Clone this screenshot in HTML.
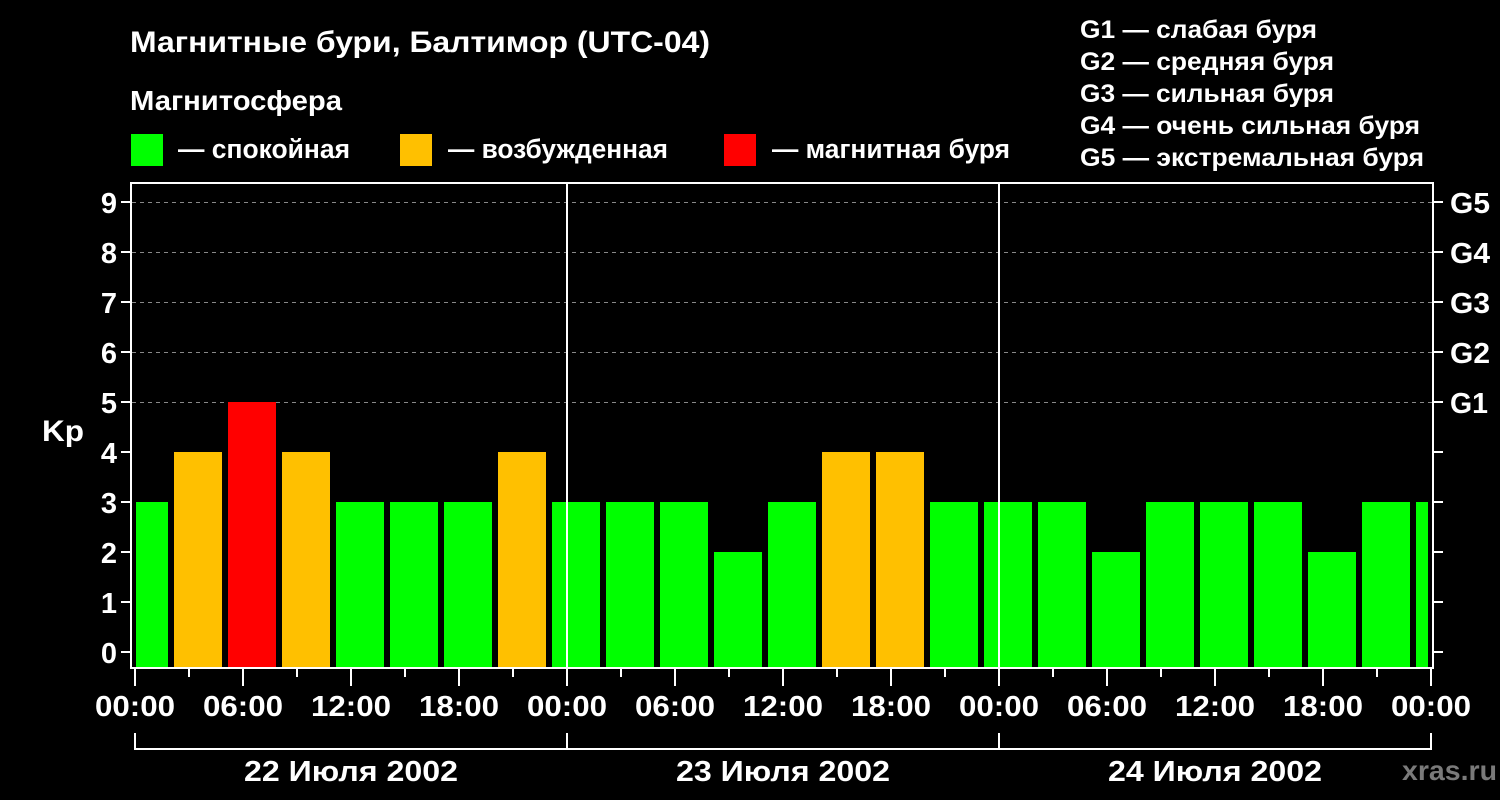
<!DOCTYPE html>
<html><head><meta charset="utf-8"><style>
html,body{margin:0;padding:0;background:#000;width:1500px;height:800px;overflow:hidden}
svg{display:block}
text{font-family:"Liberation Sans",Arial,sans-serif;font-weight:bold;fill:#fff}
</style></head><body>
<svg width="1500" height="800" viewBox="0 0 1500 800" xmlns="http://www.w3.org/2000/svg">
<rect width="1500" height="800" fill="#000"/>
<text x="130" y="52" font-size="30" textLength="580" lengthAdjust="spacingAndGlyphs">Магнитные бури, Балтимор (UTC-04)</text>
<text x="130" y="110" font-size="28" textLength="212" lengthAdjust="spacingAndGlyphs">Магнитосфера</text>
<rect x="131" y="134" width="32" height="32" fill="#00ff00"/>
<text x="178" y="158" font-size="27" textLength="172" lengthAdjust="spacingAndGlyphs">— спокойная</text>
<rect x="400" y="134" width="32" height="32" fill="#ffc000"/>
<text x="448" y="158" font-size="27" textLength="220" lengthAdjust="spacingAndGlyphs">— возбужденная</text>
<rect x="724" y="134" width="32" height="32" fill="#ff0000"/>
<text x="772" y="158" font-size="27" textLength="238" lengthAdjust="spacingAndGlyphs">— магнитная буря</text>
<g font-size="25">
<text x="1080" y="38" textLength="237" lengthAdjust="spacingAndGlyphs">G1 — слабая буря</text>
<text x="1080" y="70" textLength="254" lengthAdjust="spacingAndGlyphs">G2 — средняя буря</text>
<text x="1080" y="102" textLength="254" lengthAdjust="spacingAndGlyphs">G3 — сильная буря</text>
<text x="1080" y="134" textLength="340" lengthAdjust="spacingAndGlyphs">G4 — очень сильная буря</text>
<text x="1080" y="166" textLength="344" lengthAdjust="spacingAndGlyphs">G5 — экстремальная буря</text>
</g>
<g stroke="#888" stroke-width="1" stroke-dasharray="4,4">
<line x1="132" y1="202.5" x2="1432" y2="202.5"/>
<line x1="132" y1="252.5" x2="1432" y2="252.5"/>
<line x1="132" y1="302.5" x2="1432" y2="302.5"/>
<line x1="132" y1="352.5" x2="1432" y2="352.5"/>
<line x1="132" y1="402.5" x2="1432" y2="402.5"/>
</g>
<g>
<rect x="136" y="502" width="32" height="166" fill="#00ff00"/>
<rect x="174" y="452" width="48" height="216" fill="#ffc000"/>
<rect x="228" y="402" width="48" height="266" fill="#ff0000"/>
<rect x="282" y="452" width="48" height="216" fill="#ffc000"/>
<rect x="336" y="502" width="48" height="166" fill="#00ff00"/>
<rect x="390" y="502" width="48" height="166" fill="#00ff00"/>
<rect x="444" y="502" width="48" height="166" fill="#00ff00"/>
<rect x="498" y="452" width="48" height="216" fill="#ffc000"/>
<rect x="552" y="502" width="48" height="166" fill="#00ff00"/>
<rect x="606" y="502" width="48" height="166" fill="#00ff00"/>
<rect x="660" y="502" width="48" height="166" fill="#00ff00"/>
<rect x="714" y="552" width="48" height="116" fill="#00ff00"/>
<rect x="768" y="502" width="48" height="166" fill="#00ff00"/>
<rect x="822" y="452" width="48" height="216" fill="#ffc000"/>
<rect x="876" y="452" width="48" height="216" fill="#ffc000"/>
<rect x="930" y="502" width="48" height="166" fill="#00ff00"/>
<rect x="984" y="502" width="48" height="166" fill="#00ff00"/>
<rect x="1038" y="502" width="48" height="166" fill="#00ff00"/>
<rect x="1092" y="552" width="48" height="116" fill="#00ff00"/>
<rect x="1146" y="502" width="48" height="166" fill="#00ff00"/>
<rect x="1200" y="502" width="48" height="166" fill="#00ff00"/>
<rect x="1254" y="502" width="48" height="166" fill="#00ff00"/>
<rect x="1308" y="552" width="48" height="116" fill="#00ff00"/>
<rect x="1362" y="502" width="48" height="166" fill="#00ff00"/>
<rect x="1416" y="502" width="12" height="166" fill="#00ff00"/>
</g>
<g stroke="#fff" stroke-width="2">
<line x1="567" y1="182" x2="567" y2="668"/>
<line x1="999" y1="182" x2="999" y2="668"/>
</g>
<rect x="131" y="183" width="1302" height="485" fill="none" stroke="#fff" stroke-width="2"/>
<g stroke="#fff" stroke-width="2">
<line x1="121" y1="202" x2="131" y2="202"/><line x1="121" y1="252" x2="131" y2="252"/>
<line x1="121" y1="302" x2="131" y2="302"/><line x1="121" y1="352" x2="131" y2="352"/>
<line x1="121" y1="402" x2="131" y2="402"/><line x1="121" y1="452" x2="131" y2="452"/>
<line x1="121" y1="502" x2="131" y2="502"/><line x1="121" y1="552" x2="131" y2="552"/>
<line x1="121" y1="602" x2="131" y2="602"/><line x1="121" y1="652" x2="131" y2="652"/>
<line x1="1433" y1="202" x2="1443" y2="202"/><line x1="1433" y1="252" x2="1443" y2="252"/>
<line x1="1433" y1="302" x2="1443" y2="302"/><line x1="1433" y1="352" x2="1443" y2="352"/>
<line x1="1433" y1="402" x2="1443" y2="402"/><line x1="1433" y1="452" x2="1443" y2="452"/>
<line x1="1433" y1="502" x2="1443" y2="502"/><line x1="1433" y1="552" x2="1443" y2="552"/>
<line x1="1433" y1="602" x2="1443" y2="602"/><line x1="1433" y1="652" x2="1443" y2="652"/>
</g>
<g font-size="29" text-anchor="end">
<text x="117" y="213">9</text><text x="117" y="263">8</text><text x="117" y="313">7</text>
<text x="117" y="363">6</text><text x="117" y="413">5</text><text x="117" y="463">4</text>
<text x="117" y="513">3</text><text x="117" y="563">2</text><text x="117" y="613">1</text>
<text x="117" y="663">0</text>
</g>
<text x="42" y="441" font-size="30" textLength="42" lengthAdjust="spacingAndGlyphs">Kp</text>
<g font-size="29">
<text x="1450" y="213" textLength="40" lengthAdjust="spacingAndGlyphs">G5</text>
<text x="1450" y="263" textLength="40" lengthAdjust="spacingAndGlyphs">G4</text>
<text x="1450" y="313" textLength="40" lengthAdjust="spacingAndGlyphs">G3</text>
<text x="1450" y="363" textLength="40" lengthAdjust="spacingAndGlyphs">G2</text>
<text x="1450" y="413" textLength="38" lengthAdjust="spacingAndGlyphs">G1</text>
</g>
<g stroke="#fff" stroke-width="2">
<line x1="135" y1="669" x2="135" y2="686"/><line x1="189" y1="669" x2="189" y2="677"/>
<line x1="243" y1="669" x2="243" y2="686"/><line x1="297" y1="669" x2="297" y2="677"/>
<line x1="351" y1="669" x2="351" y2="686"/><line x1="405" y1="669" x2="405" y2="677"/>
<line x1="459" y1="669" x2="459" y2="686"/><line x1="513" y1="669" x2="513" y2="677"/>
<line x1="567" y1="669" x2="567" y2="686"/><line x1="621" y1="669" x2="621" y2="677"/>
<line x1="675" y1="669" x2="675" y2="686"/><line x1="729" y1="669" x2="729" y2="677"/>
<line x1="783" y1="669" x2="783" y2="686"/><line x1="837" y1="669" x2="837" y2="677"/>
<line x1="891" y1="669" x2="891" y2="686"/><line x1="945" y1="669" x2="945" y2="677"/>
<line x1="999" y1="669" x2="999" y2="686"/><line x1="1053" y1="669" x2="1053" y2="677"/>
<line x1="1107" y1="669" x2="1107" y2="686"/><line x1="1161" y1="669" x2="1161" y2="677"/>
<line x1="1215" y1="669" x2="1215" y2="686"/><line x1="1269" y1="669" x2="1269" y2="677"/>
<line x1="1323" y1="669" x2="1323" y2="686"/><line x1="1377" y1="669" x2="1377" y2="677"/>
<line x1="1431" y1="669" x2="1431" y2="686"/>
<polyline points="135,733 135,749 1431,749 1431,733" fill="none"/>
<line x1="567" y1="733" x2="567" y2="749"/>
<line x1="999" y1="733" x2="999" y2="749"/>
</g>
<g font-size="29" text-anchor="middle">
<text x="135" y="716" textLength="80" lengthAdjust="spacingAndGlyphs">00:00</text>
<text x="243" y="716" textLength="80" lengthAdjust="spacingAndGlyphs">06:00</text>
<text x="351" y="716" textLength="80" lengthAdjust="spacingAndGlyphs">12:00</text>
<text x="459" y="716" textLength="80" lengthAdjust="spacingAndGlyphs">18:00</text>
<text x="567" y="716" textLength="80" lengthAdjust="spacingAndGlyphs">00:00</text>
<text x="675" y="716" textLength="80" lengthAdjust="spacingAndGlyphs">06:00</text>
<text x="783" y="716" textLength="80" lengthAdjust="spacingAndGlyphs">12:00</text>
<text x="891" y="716" textLength="80" lengthAdjust="spacingAndGlyphs">18:00</text>
<text x="999" y="716" textLength="80" lengthAdjust="spacingAndGlyphs">00:00</text>
<text x="1107" y="716" textLength="80" lengthAdjust="spacingAndGlyphs">06:00</text>
<text x="1215" y="716" textLength="80" lengthAdjust="spacingAndGlyphs">12:00</text>
<text x="1323" y="716" textLength="80" lengthAdjust="spacingAndGlyphs">18:00</text>
<text x="1431" y="716" textLength="80" lengthAdjust="spacingAndGlyphs">00:00</text>
<text x="351" y="781" textLength="214" lengthAdjust="spacingAndGlyphs">22 Июля 2002</text>
<text x="783" y="781" textLength="214" lengthAdjust="spacingAndGlyphs">23 Июля 2002</text>
<text x="1215" y="781" textLength="214" lengthAdjust="spacingAndGlyphs">24 Июля 2002</text>
</g>
<text x="1402" y="780" font-size="28" style="fill:#7a7a7a" textLength="95" lengthAdjust="spacingAndGlyphs">xras.ru</text>
</svg>
</body></html>
